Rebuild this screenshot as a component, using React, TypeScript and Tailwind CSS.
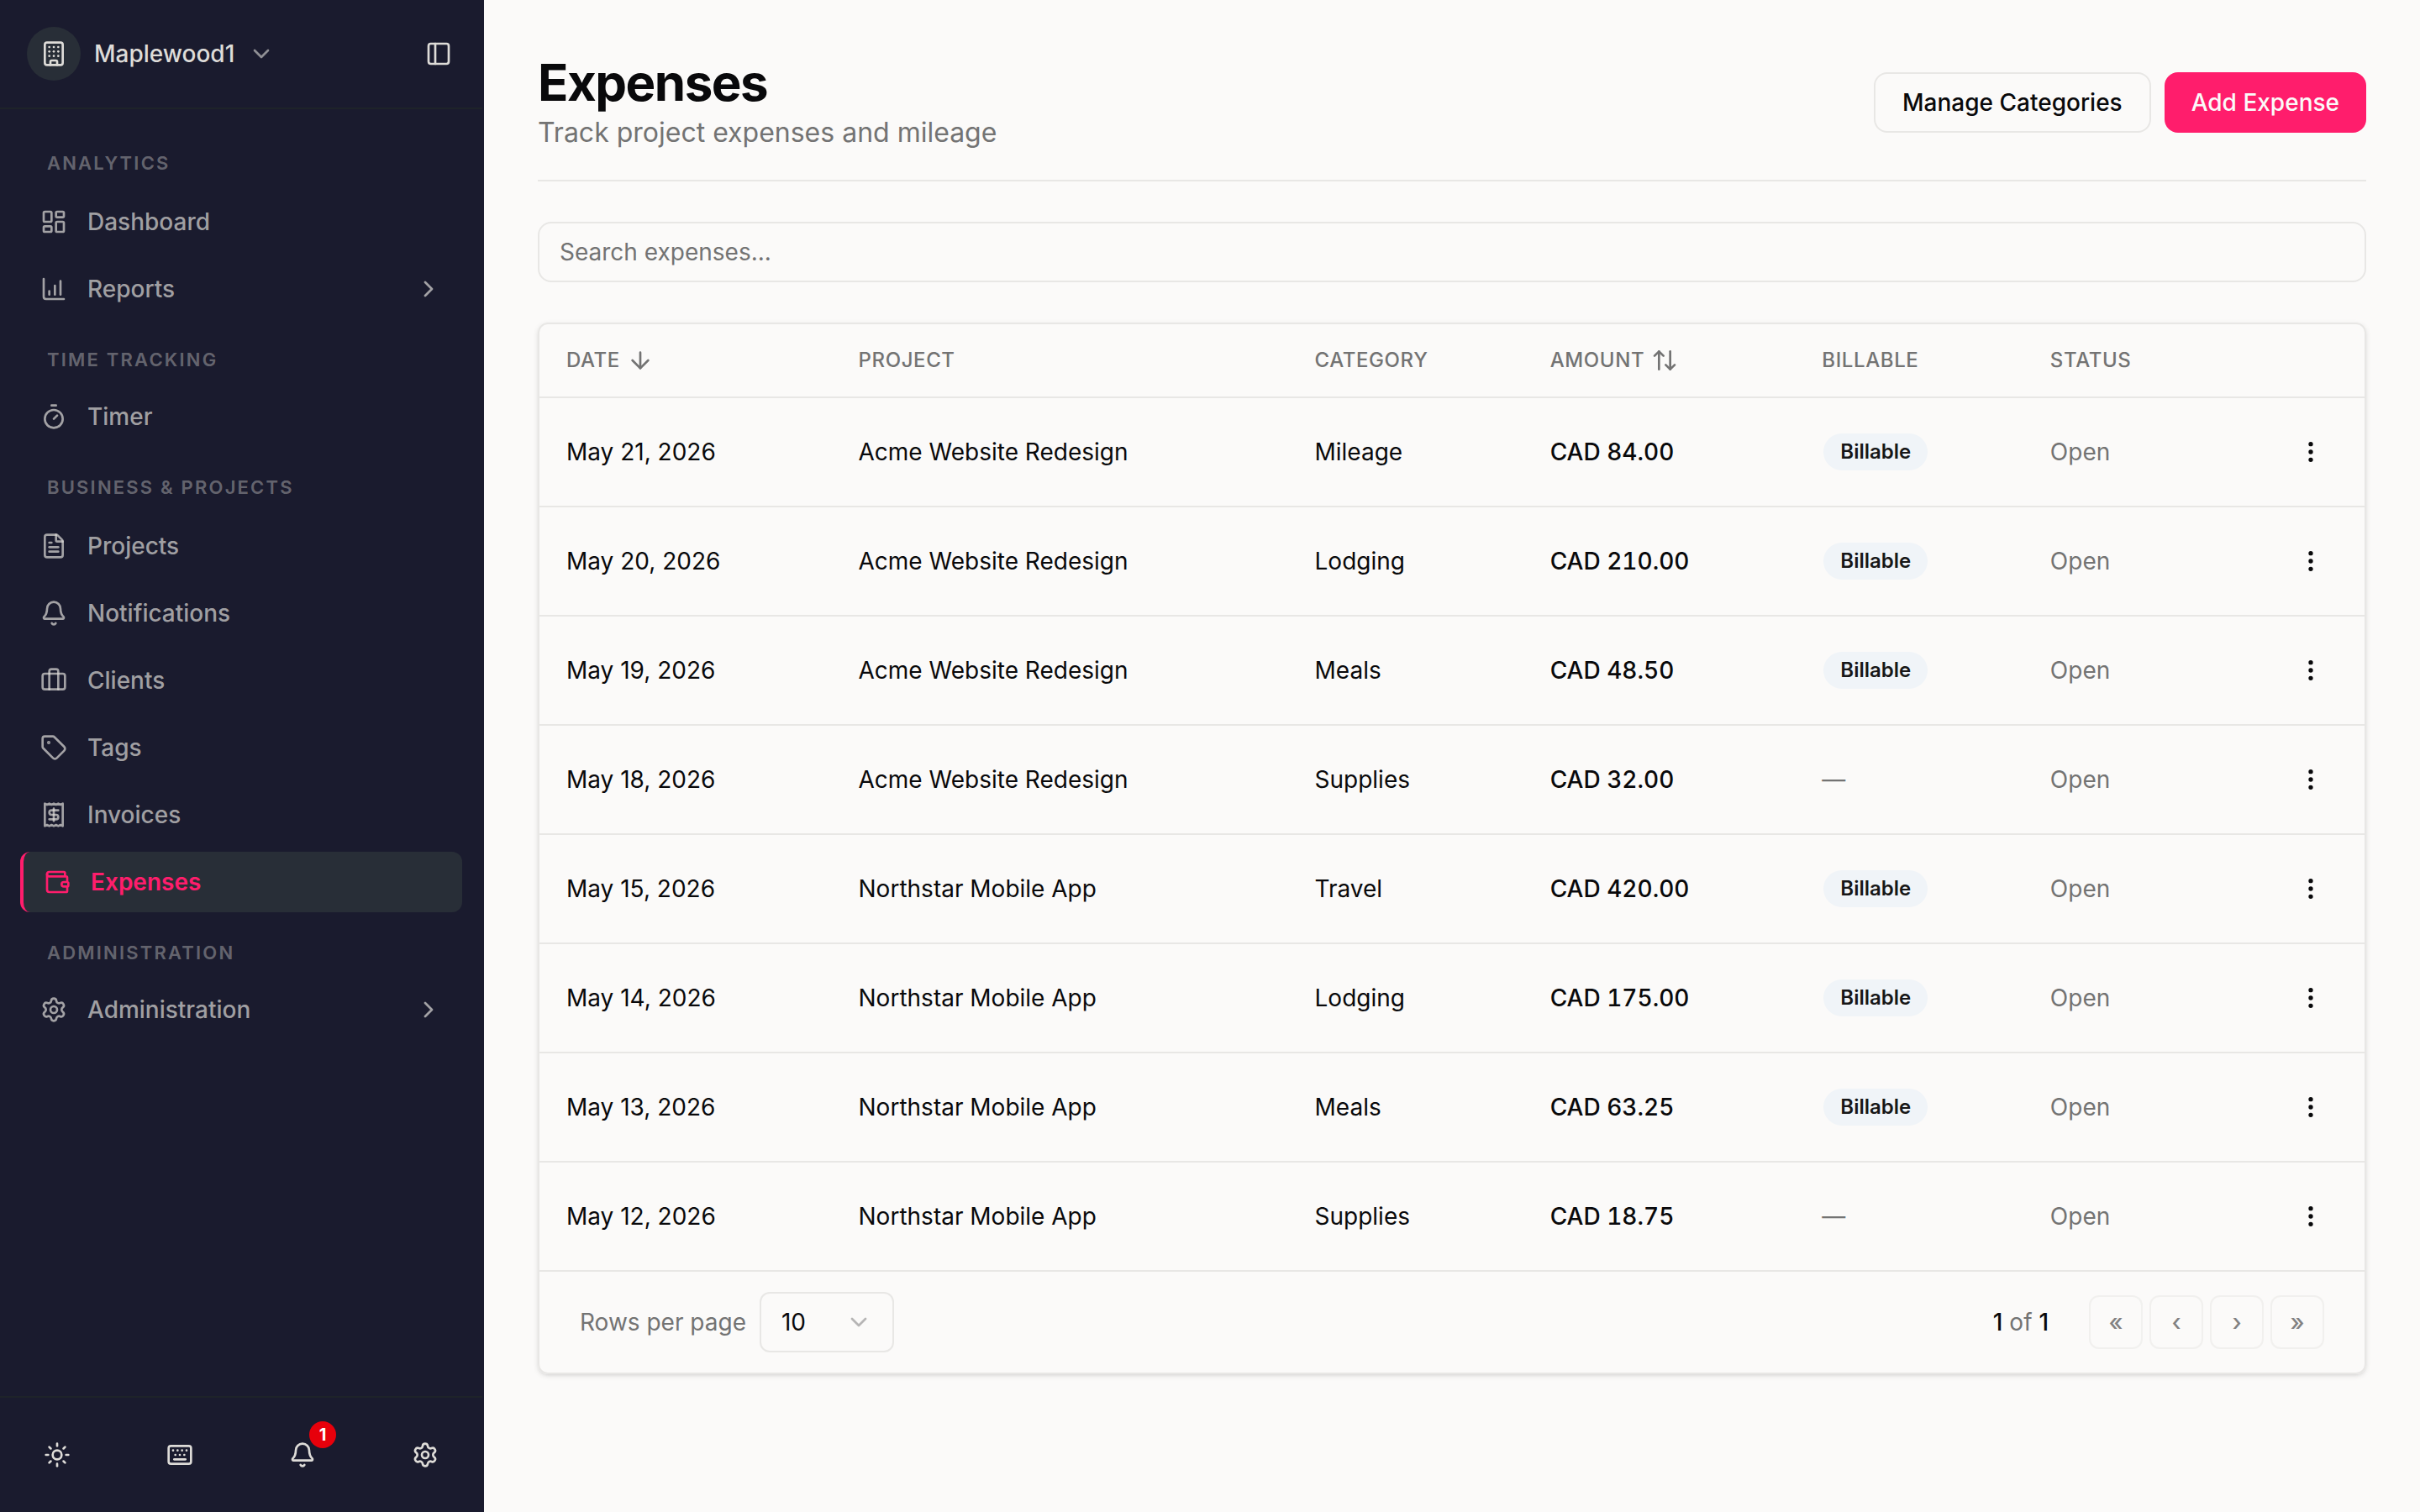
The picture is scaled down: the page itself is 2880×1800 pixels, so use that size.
import {
  ArrowDown,
  ArrowUpDown,
  Bell,
  Briefcase,
  Building,
  ChartColumnIncreasing,
  ChevronDown,
  ChevronRight,
  EllipsisVertical,
  FileText,
  Keyboard,
  LayoutDashboard,
  PanelLeft,
  Receipt,
  Settings,
  Sun,
  Tag,
  Timer,
  Wallet,
  type LucideIcon,
} from "lucide-react"

type NavItem = {
  label: string
  icon: LucideIcon
  active?: boolean
  expandable?: boolean
}

type NavSection = {
  title: string
  items: NavItem[]
}

const sections: NavSection[] = [
  {
    title: "Analytics",
    items: [
      { label: "Dashboard", icon: LayoutDashboard },
      { label: "Reports", icon: ChartColumnIncreasing, expandable: true },
    ],
  },
  {
    title: "Time Tracking",
    items: [{ label: "Timer", icon: Timer }],
  },
  {
    title: "Business & Projects",
    items: [
      { label: "Projects", icon: FileText },
      { label: "Notifications", icon: Bell },
      { label: "Clients", icon: Briefcase },
      { label: "Tags", icon: Tag },
      { label: "Invoices", icon: Receipt },
      { label: "Expenses", icon: Wallet, active: true },
    ],
  },
  {
    title: "Administration",
    items: [{ label: "Administration", icon: Settings, expandable: true }],
  },
]

const expenses = [
  { date: "May 21, 2026", project: "Acme Website Redesign", category: "Mileage", amount: "CAD 84.00", billable: true },
  { date: "May 20, 2026", project: "Acme Website Redesign", category: "Lodging", amount: "CAD 210.00", billable: true },
  { date: "May 19, 2026", project: "Acme Website Redesign", category: "Meals", amount: "CAD 48.50", billable: true },
  { date: "May 18, 2026", project: "Acme Website Redesign", category: "Supplies", amount: "CAD 32.00", billable: false },
  { date: "May 15, 2026", project: "Northstar Mobile App", category: "Travel", amount: "CAD 420.00", billable: true },
  { date: "May 14, 2026", project: "Northstar Mobile App", category: "Lodging", amount: "CAD 175.00", billable: true },
  { date: "May 13, 2026", project: "Northstar Mobile App", category: "Meals", amount: "CAD 63.25", billable: true },
  { date: "May 12, 2026", project: "Northstar Mobile App", category: "Supplies", amount: "CAD 18.75", billable: false },
]

function NavLink({ item }: { item: NavItem }) {
  const Icon = item.icon
  const base = "flex w-full items-center gap-6 h-[72px] px-6 rounded-xl text-[28px] leading-10 text-left"

  if (item.expandable) {
    return (
      <button type="button" className={`${base} font-medium text-[#dedcd8]/70`}>
        <Icon className="size-8 shrink-0" />
        <span className="flex-1">{item.label}</span>
        <ChevronRight className="size-8 shrink-0" />
      </button>
    )
  }

  return (
    <a
      href="#"
      aria-current={item.active ? "page" : undefined}
      className={`${base} ${item.active ? "border-l-4 border-[#ff1d6c] bg-[#282e37] font-semibold text-[#ff1d6c]" : "font-medium text-[#dedcd8]/70"}`}
    >
      <Icon className="size-8 shrink-0" />
      <span>{item.label}</span>
    </a>
  )
}

function Sidebar() {
  return (
    <aside className="sticky top-0 flex h-screen w-[576px] shrink-0 flex-col border-r-2 border-[#1a1b2e] bg-[#1a1b2e] text-[#dedcd8]">
      {/* Workspace switcher */}
      <div className="flex items-center justify-between border-b-2 border-[#1e2329] py-8 pr-9 pl-8">
        <button type="button" className="flex items-center gap-4 text-[28px] leading-10 font-medium">
          <span className="flex size-16 items-center justify-center rounded-full bg-[#282e37]">
            <Building className="size-8" />
          </span>
          Maplewood1
          <ChevronDown className="size-8 opacity-60" />
        </button>
        <button type="button" aria-label="Toggle sidebar">
          <PanelLeft className="size-8" />
        </button>
      </div>

      {/* Navigation */}
      <nav className="flex-1 px-6 pt-4">
        {sections.map((section) => (
          <div key={section.title} className="pt-8">
            <h2
              className={`px-8 text-[22px] leading-8 font-semibold tracking-widest uppercase text-[#dedcd8]/40 ${section.items.length > 1 ? "mb-[18px]" : "mb-4"}`}
            >
              {section.title}
            </h2>
            <div className="flex flex-col gap-2">
              {section.items.map((item) => (
                <NavLink key={item.label} item={item} />
              ))}
            </div>
          </div>
        ))}
      </nav>

      <div className="flex items-center justify-between border-t-2 border-[#1e2329] p-8">
        <button type="button" aria-label="Theme" className="flex size-[72px] items-center justify-center">
          <Sun className="size-8" />
        </button>
        <button type="button" aria-label="Keyboard shortcuts" className="flex size-[72px] items-center justify-center">
          <Keyboard className="size-8" />
        </button>
        <button type="button" aria-label="Notifications" className="relative flex size-[72px] items-center justify-center">
          <Bell className="size-8" />
          <span className="absolute -top-1 -right-1 flex size-8 items-center justify-center rounded-full bg-[#e7000b] text-xl leading-8 font-bold text-white">
            1
          </span>
        </button>
        <button type="button" aria-label="Settings" className="flex size-[72px] items-center justify-center">
          <Settings className="size-8" />
        </button>
      </div>
    </aside>
  )
}

const th = "border-b-2 border-[#e8e7e5] px-8 font-medium"
const td = "border-b-2 border-[#e8e7e5] px-8"

function ExpensesTable() {
  return (
    <table className="w-full table-fixed border-separate border-spacing-0 text-left text-[28px] leading-10">
      <thead>
        <tr className="h-[88px] text-2xl leading-8 tracking-wide uppercase text-[#737373]">
          <th className={`${th} w-[16%]`}>
            <button type="button" className="flex items-center gap-2 tracking-wide uppercase">
              Date
              <ArrowDown className="size-8" />
            </button>
          </th>
          <th className={`${th} w-[25%]`}>Project</th>
          <th className={`${th} w-[12.9%]`}>Category</th>
          <th className={`${th} w-[14.9%]`}>
            <button type="button" className="flex items-center gap-2 tracking-wide uppercase">
              Amount
              <ArrowUpDown className="size-8" />
            </button>
          </th>
          <th className={`${th} w-[12.5%]`}>Billable</th>
          <th className={th}>Status</th>
          <th className={`${th} w-32`} aria-label="Actions" />
        </tr>
      </thead>
      <tbody>
        {expenses.map((expense) => (
          <tr key={expense.date} className="h-[130px]">
            <td className={td}>{expense.date}</td>
            <td className={td}>{expense.project}</td>
            <td className={td}>{expense.category}</td>
            <td className={`${td} font-medium tabular-nums`}>{expense.amount}</td>
            <td className={td}>
              {expense.billable ? (
                <span className="inline-flex rounded-full border-2 border-transparent bg-[#f0f4f8] bg-clip-padding px-5 py-1.5 align-middle text-2xl leading-8 font-semibold text-[#171717]">
                  Billable
                </span>
              ) : (
                <span className="text-[#737373]">—</span>
              )}
            </td>
            <td className={`${td} text-[#737373]`}>Open</td>
            <td className={td}>
              <button type="button" aria-label="Row actions" className="flex size-16 items-center justify-center">
                <EllipsisVertical className="size-8" />
              </button>
            </td>
          </tr>
        ))}
      </tbody>
    </table>
  )
}

function Pagination() {
  return (
    <div className="flex items-center justify-between px-12 py-6 text-[28px] leading-10">
      <div className="flex items-center gap-4">
        <label htmlFor="page-size" className="text-[#737373]">
          Rows per page
        </label>
        <div className="relative">
          <select
            id="page-size"
            defaultValue="10"
            className="block h-[72px] w-40 appearance-none rounded-xl border-2 border-[#e8e7e5] bg-transparent px-6"
          >
            <option>10</option>
            <option>20</option>
            <option>50</option>
          </select>
          <ChevronDown className="pointer-events-none absolute top-5 right-[26px] size-8 text-[#737373] opacity-50" />
        </div>
      </div>
      <div className="flex items-center gap-12">
        <p className="text-[#737373]">
          <span className="font-medium text-[#09090b]">1</span> of <span className="font-medium text-[#09090b]">1</span>
        </p>
        <div className="flex gap-2">
          {["«", "‹", "›", "»"].map((label) => (
            <button
              key={label}
              type="button"
              disabled
              className="flex size-16 items-center justify-center rounded-xl border-2 border-[#e8e7e5] font-medium opacity-50"
            >
              {label}
            </button>
          ))}
        </div>
      </div>
    </div>
  )
}

export default function App() {
  return (
    <div className="flex min-h-screen bg-[#fbfaf9] font-[Inter,sans-serif] text-[#09090b]">
      <Sidebar />
      <main className="min-w-0 flex-1 px-16 pt-[62px] pb-16">
        <header className="flex items-center justify-between border-b-2 border-[#e8e7e5] pb-8">
          <div>
            <h1 className="text-[60px] leading-[72px] font-bold tracking-tight">Expenses</h1>
            <p className="text-[32px] leading-[48px] text-[#737373]">Track project expenses and mileage</p>
          </div>
          <div className="flex gap-4 text-[28px] leading-10 font-medium">
            <button type="button" className="h-[72px] rounded-2xl border-2 border-[#e8e7e5] px-8">
              Manage Categories
            </button>
            <button type="button" className="h-[72px] rounded-2xl bg-[#ff1d6c] px-8 text-[#fbfaf9]">
              Add Expense
            </button>
          </div>
        </header>

        <input
          type="search"
          aria-label="Search expenses"
          placeholder="Search expenses..."
          className="mt-12 block h-[72px] w-full rounded-2xl border-2 border-[#e8e7e5] bg-transparent px-6 text-[28px] leading-10 placeholder:text-[#737373]"
        />

        <section className="mt-12 rounded-xl border-2 border-[#e8e7e5] shadow-[0_2px_6px_rgba(0,0,0,0.1),0_2px_4px_-2px_rgba(0,0,0,0.1)]">
          <ExpensesTable />
          <Pagination />
        </section>
      </main>
    </div>
  )
}
